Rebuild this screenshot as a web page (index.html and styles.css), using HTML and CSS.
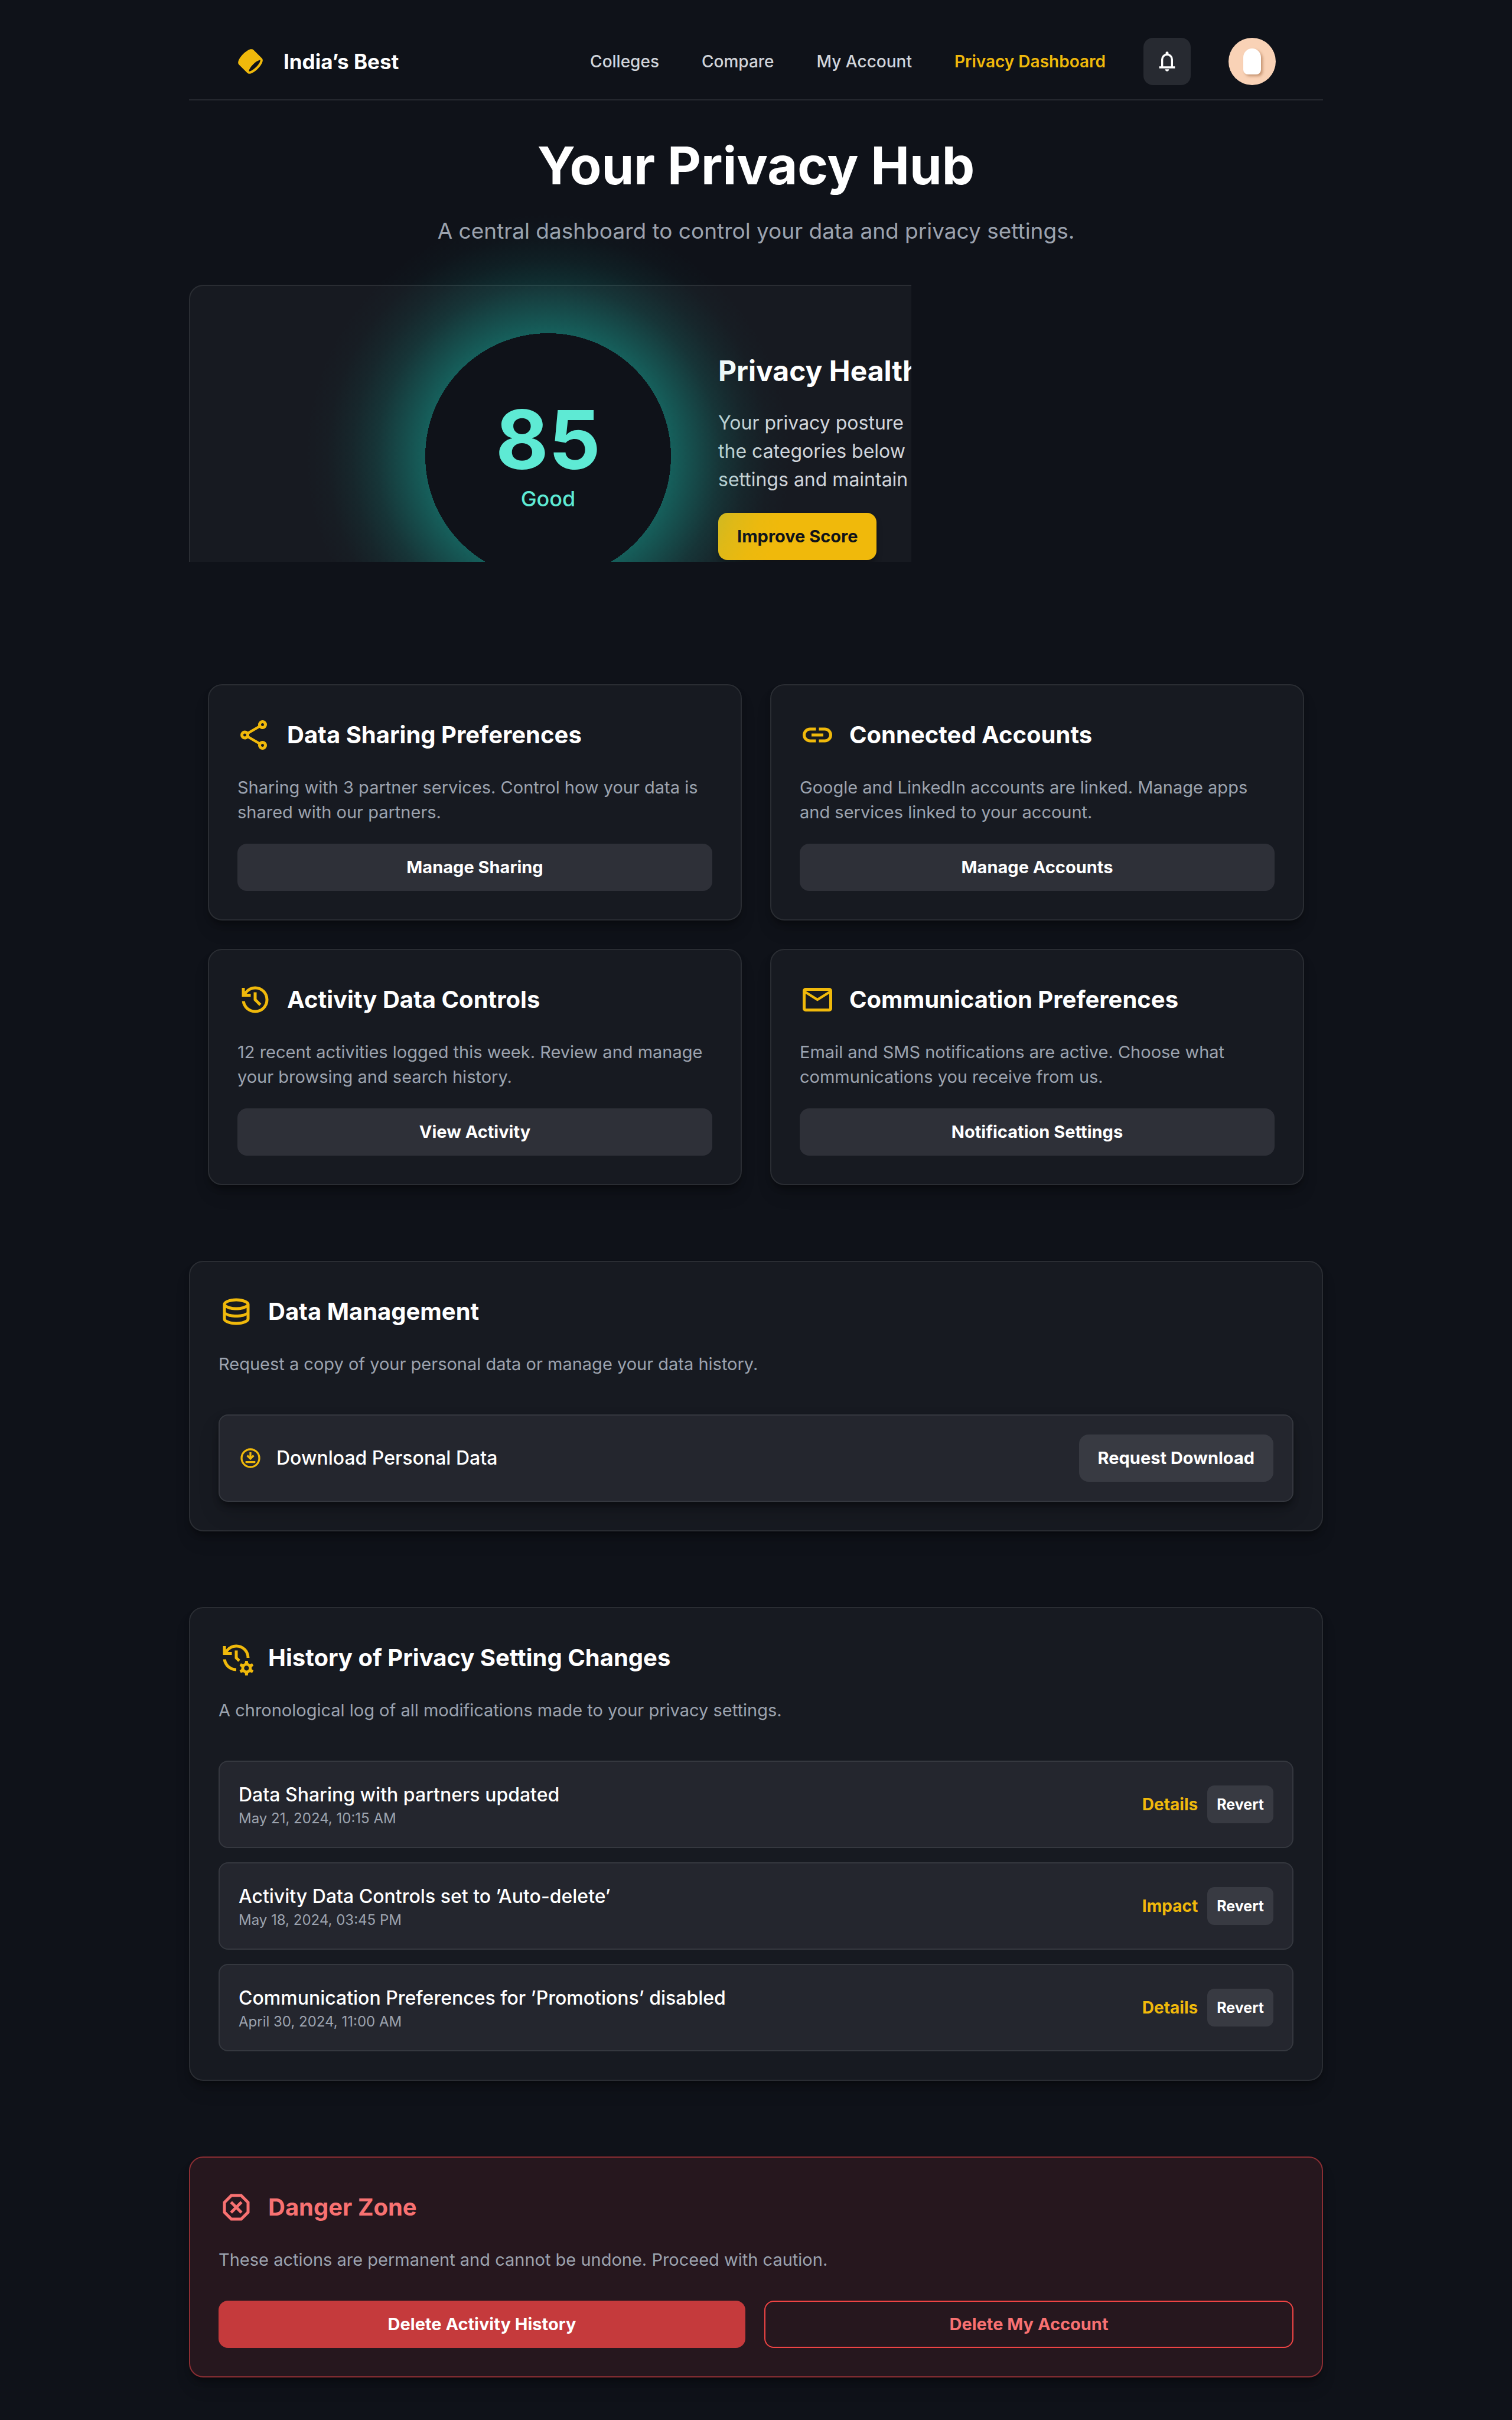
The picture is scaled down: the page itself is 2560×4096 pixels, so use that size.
FILE: index.html
```html
<!DOCTYPE html>
<html lang="en">
<head>
<meta charset="utf-8">
<meta name="viewport" content="width=device-width, initial-scale=1">
<title>India’s Best – Privacy Dashboard</title>
<link rel="stylesheet" href="styles.css">
</head>
<body>
<div class="page">
  <header class="topbar">
    <a class="brand" href="#">
      <svg class="brand-mark" viewBox="0 0 48 48" aria-hidden="true"><path fill-rule="evenodd" d="M39.475 21.6262C40.358 21.4363 40.6863 21.5589 40.7581 21.5934C40.7876 21.655 40.8547 21.857 40.8082 22.3336C40.7408 23.0255 40.4502 24.0046 39.8572 25.2301C38.6799 27.6631 36.5085 30.6631 33.5858 33.5858C30.6631 36.5085 27.6632 38.6799 25.2301 39.8572C24.0046 40.4502 23.0255 40.7407 22.3336 40.8082C21.8571 40.8547 21.6551 40.7875 21.5934 40.7581C21.5589 40.6863 21.4363 40.358 21.6262 39.475C21.8562 38.4054 22.4689 36.9657 23.5038 35.2817C24.7575 33.2417 26.5497 30.9744 28.7621 28.762C30.9744 26.5497 33.2417 24.7574 35.2817 23.5037C36.9657 22.4689 38.4054 21.8562 39.475 21.6262ZM4.41189 29.2403L18.7597 43.5881C19.8813 44.7097 21.4027 44.9179 22.7217 44.7893C24.0585 44.659 25.5148 44.1631 26.9723 43.4579C29.9052 42.0387 33.2618 39.5667 36.4142 36.4142C39.5667 33.2618 42.0387 29.9052 43.4579 26.9723C44.1631 25.5148 44.659 24.0585 44.7893 22.7217C44.9179 21.4027 44.7097 19.8813 43.5881 18.7597L29.2403 4.41187C27.8527 3.02428 25.8765 3.02573 24.2861 3.36776C22.6081 3.72863 20.7334 4.58419 18.8396 5.74801C16.4978 7.18716 13.9881 9.18353 11.5858 11.5858C9.18354 13.988 7.18717 16.4978 5.74802 18.8396C4.58421 20.7334 3.72865 22.6081 3.36778 24.2861C3.02574 25.8765 3.02429 27.8527 4.41189 29.2403Z"/></svg>
      <span>India’s Best</span>
    </a>
    <div class="topbar-right">
      <nav class="nav">
        <a href="#">Colleges</a>
        <a href="#">Compare</a>
        <a href="#">My Account</a>
        <a class="current" href="#">Privacy Dashboard</a>
      </nav>
      <button class="bell" type="button" aria-label="Notifications">
        <svg viewBox="0 -960 960 960" aria-hidden="true"><path d="M160-200v-80h80v-280q0-83 50-147.5T420-792v-28q0-25 17.5-42.5T480-880q25 0 42.5 17.5T540-820v28q80 20 130 84.5T720-560v280h80v80H160Zm320 120q-33 0-56.5-23.5T400-160h160q0 33-23.5 56.5T480-80ZM320-280h320v-280q0-66-47-113t-113-47q-66 0-113 47t-47 113v280Z"/></svg>
      </button>
      <div class="avatar"><span class="avatar-shape"></span></div>
    </div>
  </header>

  <main>
    <div class="intro">
      <h1>Your Privacy Hub</h1>
      <p>A central dashboard to control your data and privacy settings.</p>
    </div>

    <section class="hero">
      <div class="score">
        <span class="score-value">85</span>
        <span class="score-label">Good</span>
      </div>
      <div class="hero-text">
        <h2>Privacy Health</h2>
        <p>Your privacy posture<br>the categories below<br>settings and maintain</p>
        <button class="btn btn-primary" type="button">Improve Score</button>
      </div>
    </section>

    <div class="grid">
      <section class="card">
        <h2 class="card-title">
          <svg viewBox="0 -960 960 960" aria-hidden="true"><path d="M680-80q-50 0-85-35t-35-85q0-6 3-28L282-392q-16 15-37 23.5t-45 8.5q-50 0-85-35t-35-85q0-50 35-85t85-35q24 0 45 8.5t37 23.5l281-164q-2-7-2.500-13.500T560-760q0-50 35-85t85-35q50 0 85 35t35 85q0 50-35 85t-85 35q-24 0-45-8.500T598-672L317-508q2 7 2.500 13.500t.5 14.500q0 8-.5 14.500T317-452l281 164q16-15 37-23.500t45-8.500q50 0 85 35t35 85q0 50-35 85t-85 35Zm0-80q17 0 28.500-11.500T720-200q0-17-11.500-28.500T680-240q-17 0-28.500 11.500T640-200q0 17 11.500 28.500T680-160ZM200-440q17 0 28.500-11.500T240-480q0-17-11.500-28.500T200-520q-17 0-28.500 11.500T160-480q0 17 11.500 28.500T200-440Zm480-280q17 0 28.500-11.500T720-760q0-17-11.500-28.500T680-800q-17 0-28.500 11.500T640-760q0 17 11.500 28.500T680-720Z"/></svg>
          Data Sharing Preferences
        </h2>
        <p>Sharing with 3 partner services. Control how your data is<br>shared with our partners.</p>
        <button class="btn btn-soft" type="button">Manage Sharing</button>
      </section>
      <section class="card">
        <h2 class="card-title">
          <svg viewBox="0 -960 960 960" aria-hidden="true"><path d="M440-280H280q-83 0-141.500-58.500T80-480q0-83 58.500-141.500T280-680h160v80H280q-50 0-85 35t-35 85q0 50 35 85t85 35h160v80ZM320-440v-80h320v80H320Zm200 160v-80h160q50 0 85-35t35-85q0-50-35-85t-85-35H520v-80h160q83 0 141.500 58.500T880-480q0 83-58.500 141.500T680-280H520Z"/></svg>
          Connected Accounts
        </h2>
        <p>Google and LinkedIn accounts are linked. Manage apps<br>and services linked to your account.</p>
        <button class="btn btn-soft" type="button">Manage Accounts</button>
      </section>
      <section class="card">
        <h2 class="card-title">
          <svg viewBox="0 -960 960 960" aria-hidden="true"><path d="M480-120q-138 0-240.500-91.500T122-440h82q14 104 92.500 172T480-200q117 0 198.500-81.500T760-480q0-117-81.500-198.500T480-760q-69 0-129 32t-101 88h110v80H120v-240h80v94q51-64 124.500-99T480-840q75 0 140.500 28.500t114 77q48.500 48.500 77 114T840-480q0 75-28.500 140.500t-77 114q-48.500 48.500-114 77T480-120Zm112-192L440-464v-216h80v184l128 128-56 56Z"/></svg>
          Activity Data Controls
        </h2>
        <p>12 recent activities logged this week. Review and manage<br>your browsing and search history.</p>
        <button class="btn btn-soft" type="button">View Activity</button>
      </section>
      <section class="card">
        <h2 class="card-title">
          <svg viewBox="0 -960 960 960" aria-hidden="true"><path d="M160-160q-33 0-56.500-23.500T80-240v-480q0-33 23.500-56.500T160-800h640q33 0 56.500 23.500T880-720v480q0 33-23.500 56.500T800-160H160Zm320-280L160-640v400h640v-400L480-440Zm0-80 320-200H160l320 200Z"/></svg>
          Communication Preferences
        </h2>
        <p>Email and SMS notifications are active. Choose what<br>communications you receive from us.</p>
        <button class="btn btn-soft" type="button">Notification Settings</button>
      </section>
    </div>

    <section class="card card-wide">
      <h2 class="card-title">
        <svg viewBox="0 -960 960 960" aria-hidden="true"><path d="M480-120q-151 0-255.500-46.500T120-280v-400q0-66 105.500-113T480-840q149 0 254.500 47T840-680v400q0 67-104.500 113.500T480-120Zm0-479q89 0 179-25.500T760-679q-11-29-100.500-55T480-760q-91 0-178.500 25.500T200-679q14 30 101.500 55T480-599Zm0 199q42 0 81-4t74.500-11.500q35.500-7.500 67-18.500t57.500-25v-120q-26 14-57.500 25t-67 18.500Q600-528 561-524t-81 4q-42 0-82-4t-75.500-11.500Q287-543 256-554t-56-25v120q25 14 56 25t66.500 18.500Q358-408 398-404t82 4Zm0 200q46 0 93.500-7t87.500-18.500q40-11.500 67-26t32-29.500v-98q-26 14-57.500 25t-67 18.500Q600-328 561-324t-81 4q-42 0-82-4t-75.500-11.500Q287-343 256-354t-56-25v99q5 15 31.500 29t66.500 25.500q40 11.500 88 18.500t94 7Z"/></svg>
        Data Management
      </h2>
      <p>Request a copy of your personal data or manage your data history.</p>
      <div class="rows">
        <div class="row row-raised">
          <div class="row-lead">
            <svg viewBox="0 -960 960 960" aria-hidden="true"><path d="M280-280h400v-80H280v80Zm200-120 160-160-56-56-64 62v-166h-80v166l-64-62-56 56 160 160Zm0 320q-83 0-156-31.500T197-197q-54-54-85.500-127T80-480q0-83 31.500-156T197-763q54-54 127-85.500T480-880q83 0 156 31.500T763-763q54 54 85.500 127T880-480q0 83-31.500 156T763-197q-54 54-127 85.500T480-80Zm0-80q134 0 227-93t93-227q0-134-93-227t-227-93q-134 0-227 93t-93 227q0 134 93 227t227 93Z"/></svg>
            <span class="row-title">Download Personal Data</span>
          </div>
          <button class="btn btn-muted" type="button">Request Download</button>
        </div>
      </div>
    </section>

    <section class="card card-wide">
      <h2 class="card-title">
        <svg viewBox="0 -960 960 960" aria-hidden="true"><path d="M480-120q-138 0-240.500-91.500T122-440h82q14 104 92.500 172T480-200v80ZM120-560v-240h80v94q51-64 124.500-99T480-840q75 0 140.500 28.500t114 77q48.500 48.500 77 114T840-480h-80q0-117-81.500-198.500T480-760q-69 0-129 32t-101 88h110v80H120ZM532-372 440-464v-216h80v184l68 68Z"/><g transform="translate(758 -202)"><circle r="104" fill="none" stroke="currentColor" stroke-width="76"/><path d="M-36-198h72l12 72h-96zM-36 198h72l12-72h-96z"/><path transform="rotate(60)" d="M-36-198h72l12 72h-96zM-36 198h72l12-72h-96z"/><path transform="rotate(120)" d="M-36-198h72l12 72h-96zM-36 198h72l12-72h-96z"/></g></svg>
        History of Privacy Setting Changes
      </h2>
      <p>A chronological log of all modifications made to your privacy settings.</p>
      <ul class="rows">
        <li class="row">
          <div>
            <div class="row-title">Data Sharing with partners updated</div>
            <div class="row-date">May 21, 2024, 10:15 AM</div>
          </div>
          <div class="row-actions"><a href="#">Details</a><button class="btn btn-muted btn-small" type="button">Revert</button></div>
        </li>
        <li class="row">
          <div>
            <div class="row-title">Activity Data Controls set to ’Auto-delete’</div>
            <div class="row-date">May 18, 2024, 03:45 PM</div>
          </div>
          <div class="row-actions"><a href="#">Impact</a><button class="btn btn-muted btn-small" type="button">Revert</button></div>
        </li>
        <li class="row">
          <div>
            <div class="row-title">Communication Preferences for ’Promotions’ disabled</div>
            <div class="row-date">April 30, 2024, 11:00 AM</div>
          </div>
          <div class="row-actions"><a href="#">Details</a><button class="btn btn-muted btn-small" type="button">Revert</button></div>
        </li>
      </ul>
    </section>

    <section class="card card-wide card-danger">
      <h2 class="card-title">
        <svg viewBox="0 -960 960 960" aria-hidden="true"><path d="M330-120 120-330v-300l210-210h300l210 210v300L630-120H330Zm36-190 114-114 114 114 56-56-114-114 114-114-56-56-114 114-114-114-56 56 114 114-114 114 56 56Zm-2 110h232l164-164v-232L596-760H364L200-596v232l164 164Z"/></svg>
        Danger Zone
      </h2>
      <p>These actions are permanent and cannot be undone. Proceed with caution.</p>
      <div class="danger-actions">
        <button class="btn btn-danger" type="button">Delete Activity History</button>
        <button class="btn btn-danger-outline" type="button">Delete My Account</button>
      </div>
    </section>
  </main>
</div>
</body>
</html>
```
FILE: styles.css
```css
:root {
  --bg: #0f1219;
  --card: #171a21;
  --row: #24262e;
  --line: #2a2d33;
  --gold: #f0b90b;
  --teal: #5eead4;
  --text: #ffffff;
  --text-soft: #d1d5db;
  --text-dim: #9ca3af;
}

* {
  box-sizing: border-box;
}

body {
  margin: 0;
  background: var(--bg);
  color: var(--text);
  font-family: "Inter", "Liberation Sans", sans-serif;
  font-size: 28px;
  line-height: 42px;
}

h1, h2, p, ul {
  margin: 0;
  padding: 0;
}

a {
  color: inherit;
  text-decoration: none;
}

svg {
  display: block;
  flex: none;
  fill: currentColor;
}

.page {
  max-width: 1920px;
  margin: 0 auto;
  padding: 40px 0 72px;
}

/* Header */
.topbar {
  display: flex;
  align-items: center;
  justify-content: space-between;
  padding: 24px 80px;
  border-bottom: 2px solid #262930;
}

.brand {
  display: flex;
  align-items: center;
  gap: 32px;
  font-size: 35px;
  font-weight: 700;
}

.brand-mark {
  width: 48px;
  height: 48px;
  color: var(--gold);
}

.topbar-right {
  display: flex;
  align-items: center;
  gap: 64px;
}

.nav {
  display: flex;
  gap: 72px;
  color: var(--text-soft);
  font-weight: 500;
}

.nav .current {
  color: var(--gold);
  font-weight: 600;
}

.bell {
  display: grid;
  place-items: center;
  width: 80px;
  height: 80px;
  padding: 0;
  border: 0;
  border-radius: 16px;
  background: #272a31;
  color: var(--text);
}

.bell svg {
  width: 40px;
  height: 40px;
}

.avatar {
  display: grid;
  place-items: center;
  width: 80px;
  height: 80px;
  border-radius: 50%;
  background: #f9d2b6;
}

.avatar-shape {
  width: 30px;
  height: 44px;
  border-radius: 15px 15px 8px 8px;
  background: #ffffff;
  box-shadow: 3px 3px 4px rgba(150, 90, 50, 0.5);
}

/* Intro */
.intro {
  padding: 50px 32px 64px;
  text-align: center;
}

.intro h1 {
  font-size: 88px;
  font-weight: 700;
  line-height: 120px;
}

.intro p {
  margin-top: 24px;
  color: var(--text-dim);
  font-size: 37px;
  line-height: 54px;
}

/* Score hero: its glow may rise above the card, all else is cut at the edge */
.hero {
  display: flex;
  align-items: flex-start;
  gap: 80px;
  max-width: 1223px;
  height: 469px;
  padding: 80px 0 0 398px;
  border: 2px solid var(--line);
  border-width: 2px 0 0 2px;
  border-radius: 24px 0 0 0;
  background: var(--card);
  clip-path: inset(-240px 0 0 0);
}

.score {
  position: relative;
  z-index: 1;
  display: flex;
  flex: none;
  flex-direction: column;
  align-items: center;
  justify-content: center;
  width: 416px;
  height: 416px;
  border-radius: 50%;
  background: var(--bg);
  color: var(--teal);
}

.score::before {
  content: "";
  position: absolute;
  inset: -208px;
  background: radial-gradient(
    closest-side,
    transparent 50%,
    rgba(20, 184, 166, 0.44) 50%,
    rgba(20, 184, 166, 0.29) 61%,
    rgba(20, 184, 166, 0.17) 70%,
    rgba(20, 184, 166, 0.08) 80%,
    rgba(20, 184, 166, 0.02) 90%,
    transparent 99%
  );
  pointer-events: none;
}

.score-value {
  font-size: 138px;
  font-weight: 700;
  line-height: 144px;
}

.score-label {
  font-size: 36px;
  font-weight: 500;
  line-height: 56px;
}

.hero-text {
  flex: none;
  padding-top: 32px;
  white-space: nowrap;
}

.hero-text h2 {
  font-size: 48px;
  font-weight: 700;
  line-height: 64px;
}

.hero-text p {
  margin: 32px 0;
  color: var(--text-soft);
  font-size: 32px;
  line-height: 48px;
}

/* Buttons */
.btn {
  height: 80px;
  padding: 0 32px;
  border: 0;
  border-radius: 16px;
  color: var(--text);
  font: inherit;
  font-size: 29px;
  font-weight: 700;
  white-space: nowrap;
}

.btn-primary {
  background: var(--gold);
  color: var(--bg);
  box-shadow: 0 8px 12px -2px rgba(0, 0, 0, 0.4);
}

.btn-soft {
  background: #2e3038;
}

.btn-muted {
  background: #383a42;
}

.btn-small {
  height: 64px;
  padding: 0 16px;
  border-radius: 12px;
  font-size: 25px;
}

.btn-danger {
  background: #c53a3c;
}

.btn-danger-outline {
  border: 2px solid #ef4444;
  background: transparent;
  color: #f87171;
}

/* Cards */
.grid {
  display: grid;
  grid-template-columns: repeat(auto-fit, minmax(640px, 1fr));
  gap: 48px;
  margin-top: 207px;
  padding: 0 32px;
}

.card {
  display: flex;
  flex-direction: column;
  padding: 48px;
  border: 2px solid var(--line);
  border-radius: 24px;
  background: var(--card);
  box-shadow: 0 8px 12px -4px rgba(0, 0, 0, 0.4), 0 20px 30px -6px rgba(0, 0, 0, 0.15);
}

.card-wide {
  margin-top: 128px;
}

.card-title {
  display: flex;
  align-items: center;
  gap: 24px;
  margin-bottom: 32px;
  font-size: 40px;
  font-weight: 700;
  line-height: 72px;
}

.card-title svg {
  width: 60px;
  height: 60px;
  color: var(--gold);
}

.card p {
  color: var(--text-dim);
  font-size: 29px;
}

.card > .btn {
  margin-top: 32px;
}

/* Rows */
.rows {
  display: flex;
  flex-direction: column;
  gap: 24px;
  margin-top: 64px;
  list-style: none;
}

.row {
  display: flex;
  align-items: center;
  justify-content: space-between;
  gap: 32px;
  padding: 32px;
  border: 2px solid #35383f;
  border-radius: 16px;
  background: var(--row);
}

.row-raised {
  box-shadow: 0 8px 12px -2px rgba(0, 0, 0, 0.4), 0 20px 40px -6px rgba(0, 0, 0, 0.2);
}

.row-lead {
  display: flex;
  align-items: center;
  gap: 24px;
}

.row-lead svg {
  width: 40px;
  height: 40px;
  color: var(--gold);
}

.row-title {
  font-size: 32px;
  font-weight: 500;
  line-height: 48px;
}

.row-date {
  color: var(--text-dim);
  font-size: 24px;
  line-height: 32px;
}

.row-actions {
  display: flex;
  align-items: center;
  gap: 16px;
}

.row-actions a {
  color: var(--gold);
  font-weight: 700;
}

/* Danger zone */
.card-danger {
  border-color: #8b2e33;
  background: #26171e;
}

.card-danger .card-title,
.card-danger .card-title svg {
  color: #f87171;
}

.danger-actions {
  display: flex;
  gap: 32px;
  margin-top: 48px;
}

.danger-actions .btn {
  flex: 1;
}
```
